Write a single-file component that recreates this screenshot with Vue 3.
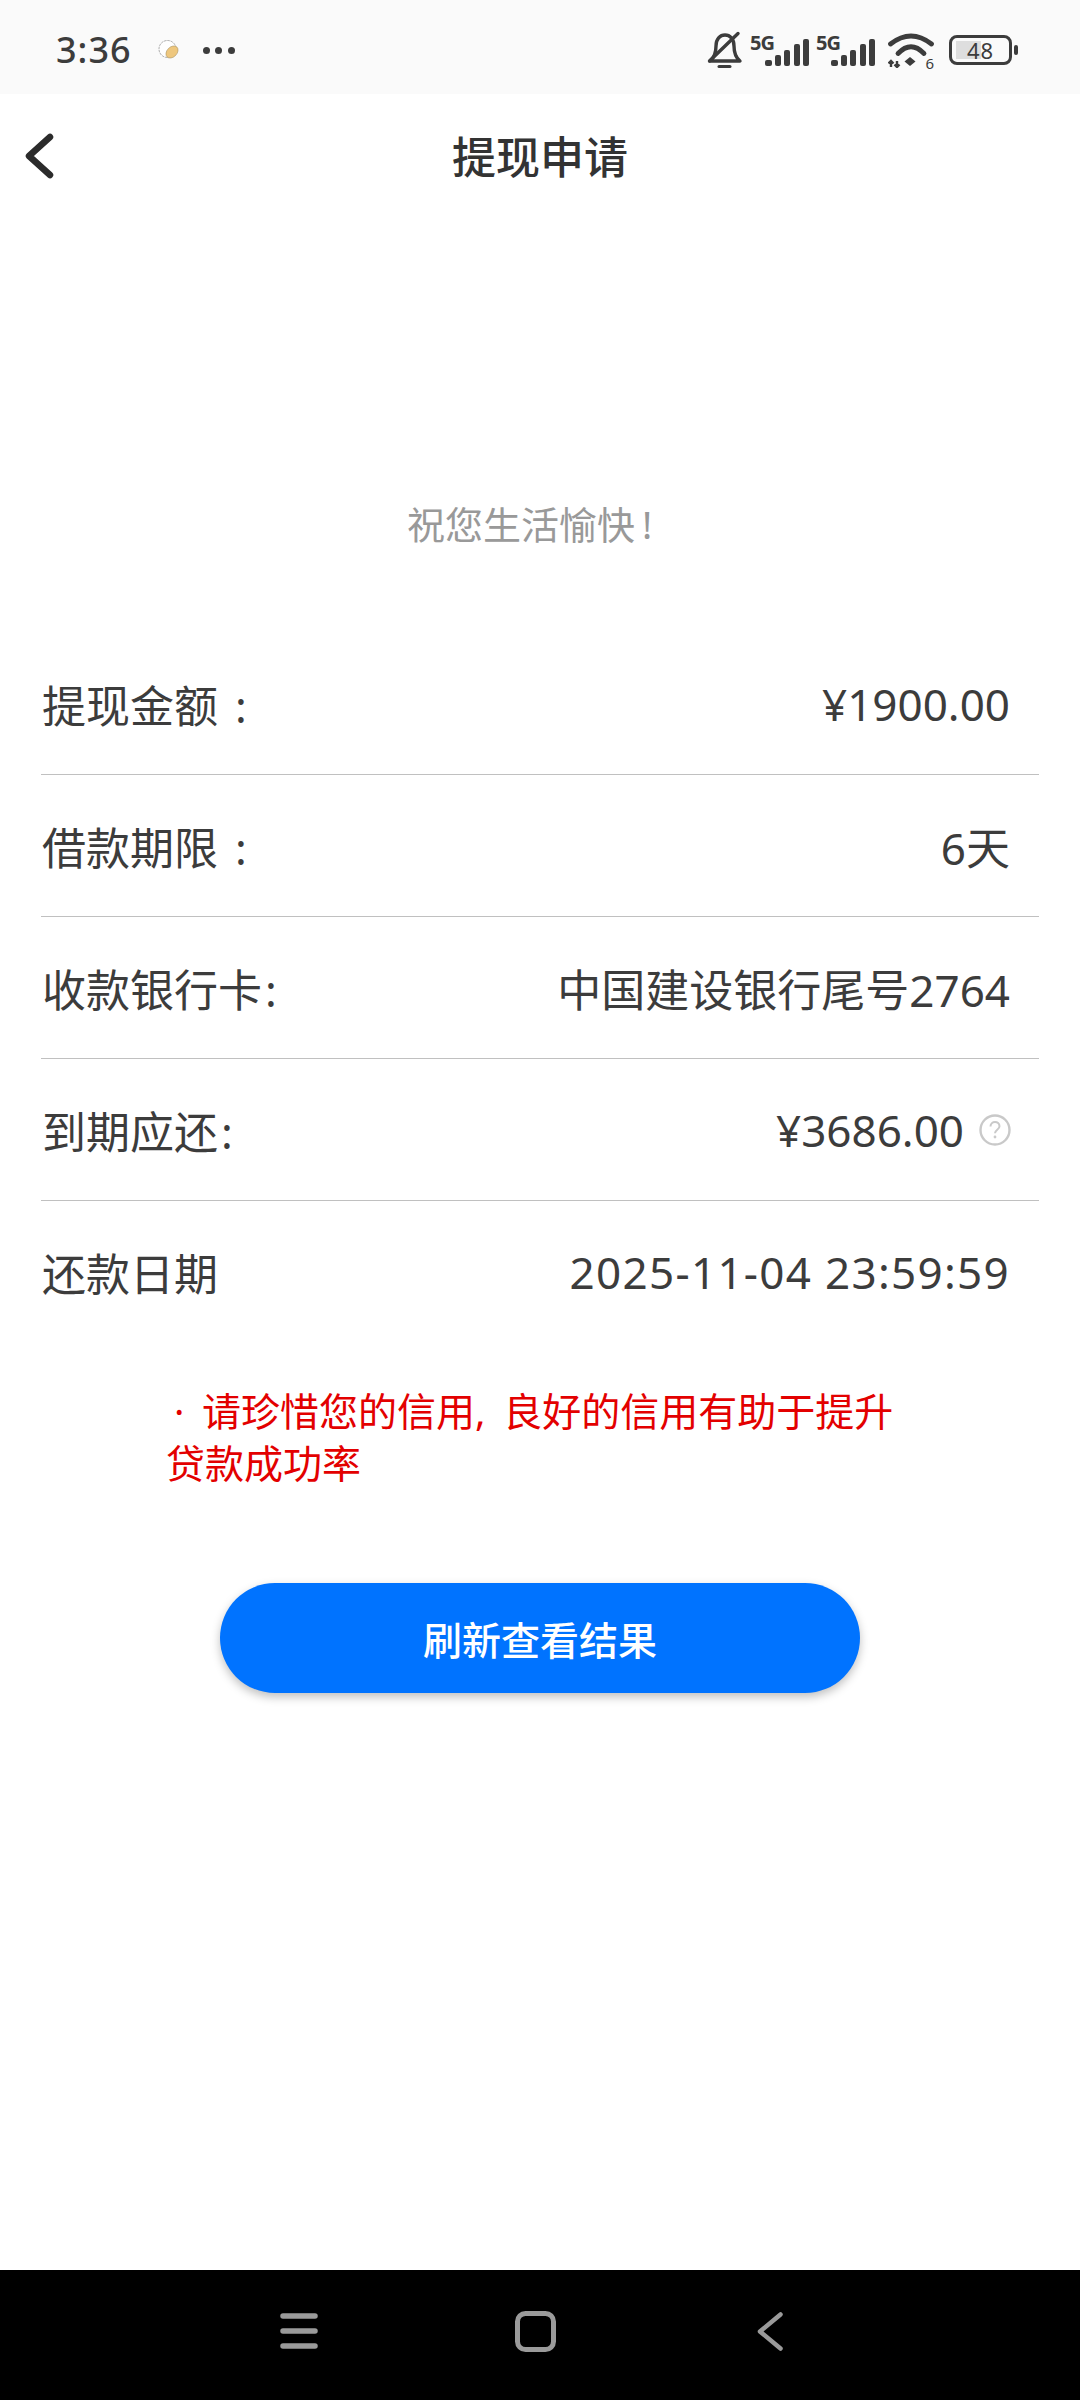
<template>
  <div class="page">
    <div class="status">
      <span class="time">3:36</span>
      <svg class="app-dot" viewBox="0 0 22 20" width="22" height="20" aria-hidden="true">
        <circle cx="9.500" cy="9" r="8.500" fill="#fff" stroke="#777" stroke-width="0.600" stroke-dasharray="2.500 0.800" />
        <ellipse cx="14" cy="12" rx="7" ry="5" fill="#eec77e" stroke="#8a7748" stroke-width="0.400" transform="rotate(-45 14 12)" />
      </svg>
      <span class="dots"><i></i><i></i><i></i></span>
      <div class="status-right">
        <svg width="36" height="38" viewBox="0 0 36 38" aria-hidden="true">
          <path d="M3 30c5-4 6-9 6-15C9 8 13 4 18 4s9 4 9 11c0 6 1 11 6 15z" fill="none" stroke="#3c3c3c" stroke-width="3.400" stroke-linejoin="round" />
          <path d="M12 35.500h11" stroke="#3c3c3c" stroke-width="3" stroke-linecap="round" />
          <path d="M2.500 30L31 2.500" stroke="#3c3c3c" stroke-width="3.400" stroke-linecap="round" />
        </svg>
        <div v-for="n in 2" :key="n" class="signal">
          <span class="tag">5G</span>
          <svg width="44" height="27" viewBox="0 0 44 27" aria-hidden="true">
            <rect x="0" y="21" width="7" height="6" rx="2" fill="#3c3c3c" />
            <rect x="10" y="16" width="6" height="11" rx="2" fill="#3c3c3c" />
            <rect x="19" y="11" width="6" height="16" rx="2" fill="#3c3c3c" />
            <rect x="29" y="5" width="6" height="22" rx="2" fill="#3c3c3c" />
            <rect x="38" y="0" width="6" height="27" rx="2" fill="#3c3c3c" />
          </svg>
        </div>
        <div class="wifi">
          <svg width="46" height="35" viewBox="0 0 46 35" aria-hidden="true">
            <path d="M2.500 11Q23-5 43.500 11" fill="none" stroke="#3c3c3c" stroke-width="4.800" stroke-linecap="round" />
            <path d="M10 20.500Q23 7 36 20.500" fill="none" stroke="#3c3c3c" stroke-width="4.800" stroke-linecap="round" />
            <path d="M22 24l5.500 4.500-5.500 4.500-5.500-4.500z" fill="#3c3c3c" />
            <path d="M3 28v6M0.500 30.500l2.500-2.500 2.500 2.500M9 28v6M6.500 31.500l2.500 2.500 2.500-2.500" fill="none" stroke="#3c3c3c" stroke-width="2.400" />
          </svg>
          <span class="wifi-num">6</span>
        </div>
        <div class="battery">
          <div class="cell"><span class="level"></span><span class="pct">48</span></div>
          <span class="nub"></span>
        </div>
      </div>
    </div>

    <header class="head">
      <svg class="back" width="30" height="50" viewBox="0 0 30 50" aria-hidden="true">
        <path d="M25 6L4 25l21 19" fill="none" stroke="#2b2b2b" stroke-width="6.500" stroke-linecap="round" stroke-linejoin="round" />
      </svg>
      <span class="title">提现申请</span>
    </header>

    <main class="body">
      <p class="hint">祝您生活愉快<span class="hint-mark">!</span></p>
      <div class="rows">
        <div v-for="row in rows" :key="row.label" class="row">
          <span>{{ row.label }}<span v-if="row.colon" class="colon" :class="{ 'colon--far': row.colon === 'far' }">:</span></span>
          <span class="val" :class="{ 'val--date': row.date }">
            {{ row.value }}
            <svg v-if="row.help" class="help" width="32" height="32" viewBox="0 0 32 32" aria-hidden="true">
              <circle cx="16" cy="16" r="14.500" fill="none" stroke="#c9c9c9" stroke-width="2.400" />
              <path d="M11.500 12.500c0-6 9-6 9-.2 0 3.500-4.500 3.500-4.500 7" fill="none" stroke="#c9c9c9" stroke-width="2" />
              <circle cx="16" cy="23" r="1.400" fill="#c9c9c9" />
            </svg>
          </span>
        </div>
      </div>
      <p class="notice">·   请珍惜您的信用,  良好的信用有助于提升贷款成功率</p>
      <button class="refresh">刷新查看结果</button>
    </main>

    <nav class="navbar">
      <svg width="38" height="36" viewBox="0 0 38 36" aria-hidden="true">
        <path d="M3 3h32M3 18h32M3 33h32" stroke="#9a9a9a" stroke-width="5.500" stroke-linecap="round" />
      </svg>
      <svg width="41" height="41" viewBox="0 0 41 41" aria-hidden="true">
        <rect x="2.500" y="2.500" width="36" height="36" rx="8" fill="none" stroke="#9a9a9a" stroke-width="5" />
      </svg>
      <svg width="26" height="39" viewBox="0 0 26 39" aria-hidden="true">
        <path d="M23.500 2.500L3 19.500 23.500 36.500" fill="none" stroke="#9a9a9a" stroke-width="4.500" stroke-linecap="round" stroke-linejoin="round" />
      </svg>
    </nav>
  </div>
</template>

<script setup>
const rows = [
  { label: '提现金额', colon: 'far', value: '¥1900.00' },
  { label: '借款期限', colon: 'far', value: '6天' },
  { label: '收款银行卡', colon: 'near', value: '中国建设银行尾号2764' },
  { label: '到期应还', colon: 'near', value: '¥3686.00', help: true },
  { label: '还款日期', value: '2025-11-04 23:59:59', date: true },
]
</script>

<style>
html, body { margin: 0; background: #fff; }
</style>

<style scoped>
.page {
  width: 1080px; height: 2400px;
  display: flex; flex-direction: column;
  font-family: "Noto Sans", "Noto Sans CJK SC", sans-serif;
  color: #3c3c3c; background: #fff;
}
.status {
  height: 94px; background: #fafafa; flex: none;
  display: flex; align-items: center;
  padding: 6px 62px 0 56px; box-sizing: border-box;
}
.time { font-size: 36px; font-weight: 500; line-height: 40px; letter-spacing: 1px; }
.app-dot { margin-left: 26px; }
.dots { display: flex; gap: 5.500px; margin-left: 23px; }
.dots i { width: 7px; height: 7px; border-radius: 50%; background: #3c3c3c; }
.status-right { margin-left: auto; display: flex; align-items: center; gap: 7px; }
.signal { position: relative; width: 59px; height: 32px; display: flex; align-items: flex-end; justify-content: flex-end; }
.tag {
  position: absolute; left: 0; top: -1px;
  font-size: 20px; font-weight: 700; line-height: 20px; letter-spacing: -1px;
}
.wifi { position: relative; width: 46px; height: 35px; margin-left: 6px; }
.wifi svg { display: block; }
.wifi-num { position: absolute; right: 0; bottom: -3px; font-size: 15px; line-height: 15px; }
.battery { display: flex; align-items: center; gap: 2px; margin-left: 8px; }
.cell {
  width: 63px; height: 30px; box-sizing: border-box;
  border: 3px solid #3c3c3c; border-radius: 8px;
  position: relative; display: flex; align-items: center; justify-content: center;
}
.level { position: absolute; left: 4px; top: 3px; bottom: 3px; width: 25px; background: #dedede; }
.pct { position: relative; font-size: 22px; letter-spacing: 1px; line-height: 1; }
.nub { width: 4px; height: 10px; background: #3c3c3c; border-radius: 2px; }

.head {
  height: 122px; flex: none; position: relative;
  display: flex; align-items: center; justify-content: center;
}
.back { position: absolute; left: 25px; top: 37px; }
.title { font-size: 44px; font-weight: 500; color: #333; }

.body { flex: 1; display: flex; flex-direction: column; }
.hint {
  margin: 0; padding-top: 283px; text-align: center;
  font-size: 38px; line-height: 50px; color: #999;
}
.hint-mark {
  display: inline-block; width: 38px; padding-left: 7px;
  box-sizing: border-box; text-align: left;
}
.rows { margin: 84px 41px 0; }
.row {
  height: 142px; box-sizing: border-box;
  display: flex; align-items: center; justify-content: space-between;
  border-bottom: 1px solid #c0c0c0;
  font-size: 44px; padding: 0 29px 0 1px;
}
.row:last-child { border-bottom: 0; }
.colon { margin-left: 3px; }
.colon--far { margin-left: 17px; }
.val { display: flex; align-items: center; gap: 15px; }
.val--date { letter-spacing: 1.300px; }
.help { margin-right: -1px; }
.notice {
  margin: 42px 0 0 166px; width: 745px;
  font-size: 39px; line-height: 52px; color: #e30000;
  white-space: pre-wrap; word-spacing: 7.500px; text-indent: 8px;
}
.refresh {
  align-self: center; margin-top: 94px;
  width: 640px; height: 110px; border: 0; border-radius: 55px;
  background: #0073ff; color: #fff;
  font-family: inherit; font-size: 39px; font-weight: 500;
  box-shadow: 0 4px 10px rgba(0, 0, 0, 0.25);
}
.navbar {
  height: 130px; flex: none; background: #000;
  display: flex; align-items: center; justify-content: center;
  padding: 0 17px 8px 0; box-sizing: border-box;
}
.navbar svg:nth-child(1) { margin-right: 197px; }
.navbar svg:nth-child(2) { margin-right: 201px; }
</style>
